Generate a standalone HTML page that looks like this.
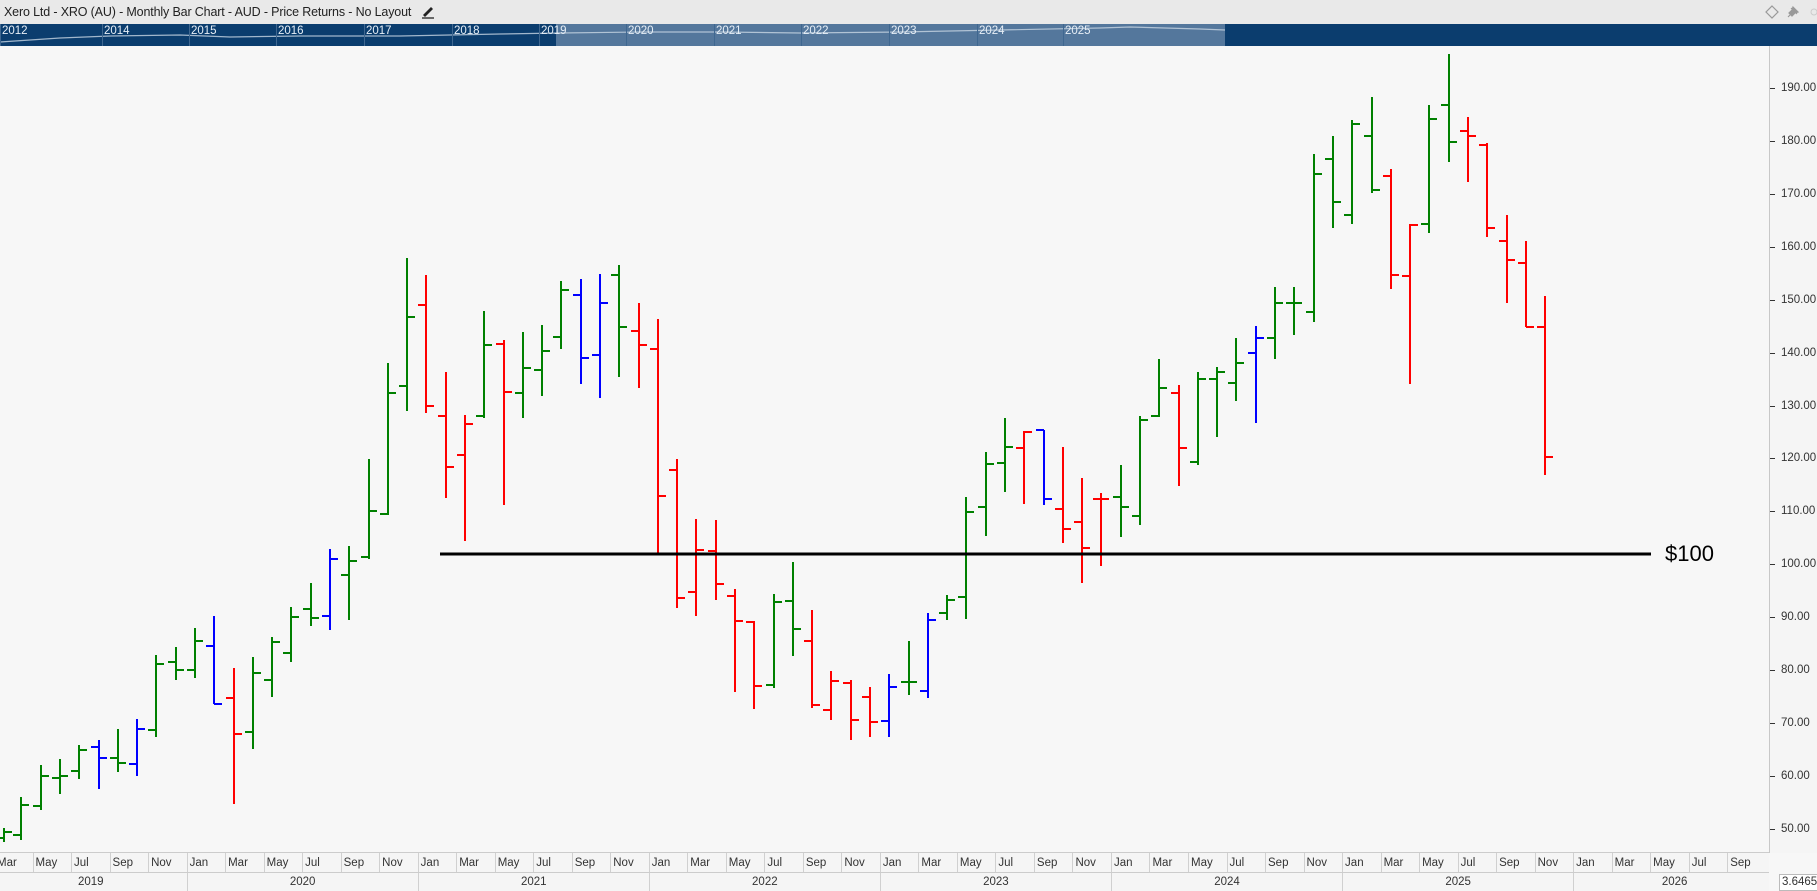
<!DOCTYPE html>
<html><head><meta charset="utf-8"><style>
*{margin:0;padding:0;box-sizing:border-box}
body{width:1817px;height:891px;overflow:hidden;background:#f7f7f7;font-family:"Liberation Sans",sans-serif;position:relative;color:#333}
#title{position:absolute;left:0;top:0;width:1817px;height:24px;background:#e9e9e9;font-size:12.5px;line-height:24px;padding-left:4px;color:#222;letter-spacing:-0.15px;white-space:nowrap}
#nav{position:absolute;left:0;top:24px;width:1817px;height:22px;background:#0b3d6e}
#sel{position:absolute;left:556px;top:0;width:669px;height:22px;background:#54779c}
.ny{position:absolute;top:0;height:22px;border-left:1px solid #3f6790;color:#e6eef6;font-size:11.5px;line-height:14px;padding-left:1px}
#axis{position:absolute;left:1769px;top:46px;width:48px;height:807px;border-left:1px solid #c8c8c8;background:#f5f5f5}
.pl{position:absolute;left:1781px;font-size:11.5px;color:#333;transform:translateY(-50%)}
.pt{position:absolute;left:1770px;width:5px;height:1px;background:#333}
#months{position:absolute;left:0;top:852px;width:1769px;height:21px;border-top:1px solid #ccc;border-bottom:1px solid #ccc;overflow:hidden;background:#f5f5f5}
#mrow{position:absolute;left:-6px;top:0;display:flex;height:20px}
#mrow div{width:38.52px;flex:none;border-left:1px solid #d0d0d0;font-size:11.5px;line-height:20px;padding-left:2px}
#years{position:absolute;left:0;top:873px;width:1769px;height:18px;overflow:hidden;background:#f5f5f5}
#yrow{position:absolute;left:-6px;top:0;display:flex;height:18px}
#yrow div{flex:none;border-left:1px solid #d0d0d0;font-size:11.5px;line-height:18px;text-align:center}
</style></head><body>
<div id="title">Xero Ltd - XRO (AU) - Monthly Bar Chart - AUD - Price Returns - No Layout<svg style="vertical-align:-3px;margin-left:9px" width="16" height="16" viewBox="0 0 16 16"><path d="M3 12 L11 4 L13 6 L5 14 Z" fill="#222"/><path d="M2 15 H14" stroke="#222" stroke-width="1.3"/></svg></div>
<svg style="position:absolute;left:1764px;top:3px" width="53" height="18" viewBox="0 0 53 18"><path d="M8 3 L14 9 L8 15 L2 9 Z" fill="none" stroke="#999" stroke-width="1.2"/><path d="M24 14 L28 10 M27 5 L33 11 M29 4 L34 9 L31 10 L28 13 L25 10 L28 7 Z" stroke="#999" fill="#999" stroke-width="1.2"/><circle cx="50" cy="9" r="3" fill="none" stroke="#ccc"/></svg>
<div id="nav">
<div id="sel"></div>
<svg style="position:absolute;left:0;top:0" width="1225" height="22"><polyline points="0,18 60,14 110,12 180,11 230,13 300,12 400,12 500,10 560,9 640,8 720,8 800,9 900,8 1000,6 1100,4 1130,3 1200,5 1225,6" fill="none" stroke="#c8d6e4" stroke-width="1.2" opacity=".8"/></svg>
<div class="ny" style="left:0">2012</div><div class="ny" style="left:102px">2014</div><div class="ny" style="left:189px">2015</div><div class="ny" style="left:276px">2016</div><div class="ny" style="left:364px">2017</div><div class="ny" style="left:452px">2018</div><div class="ny" style="left:539px">2019</div><div class="ny" style="left:626px">2020</div><div class="ny" style="left:714px">2021</div><div class="ny" style="left:801px">2022</div><div class="ny" style="left:889px">2023</div><div class="ny" style="left:977px">2024</div><div class="ny" style="left:1063px">2025</div>
</div>
<svg id="chart" style="position:absolute;left:0;top:0" width="1769" height="852"></svg>
<div id="axis"></div>
<div class="pt" style="top:88px"></div><div class="pl" style="top:88px">190.00</div>
<div class="pt" style="top:141px"></div><div class="pl" style="top:141px">180.00</div>
<div class="pt" style="top:194px"></div><div class="pl" style="top:194px">170.00</div>
<div class="pt" style="top:247px"></div><div class="pl" style="top:247px">160.00</div>
<div class="pt" style="top:300px"></div><div class="pl" style="top:300px">150.00</div>
<div class="pt" style="top:353px"></div><div class="pl" style="top:353px">140.00</div>
<div class="pt" style="top:406px"></div><div class="pl" style="top:406px">130.00</div>
<div class="pt" style="top:458px"></div><div class="pl" style="top:458px">120.00</div>
<div class="pt" style="top:511px"></div><div class="pl" style="top:511px">110.00</div>
<div class="pt" style="top:564px"></div><div class="pl" style="top:564px">100.00</div>
<div class="pt" style="top:617px"></div><div class="pl" style="top:617px">90.00</div>
<div class="pt" style="top:670px"></div><div class="pl" style="top:670px">80.00</div>
<div class="pt" style="top:723px"></div><div class="pl" style="top:723px">70.00</div>
<div class="pt" style="top:776px"></div><div class="pl" style="top:776px">60.00</div>
<div class="pt" style="top:829px"></div><div class="pl" style="top:829px">50.00</div>
<div style="position:absolute;left:1665px;top:541px;font-size:22px;color:#000">$100</div>
<div id="months"><div id="mrow">
<div>Mar</div><div>May</div><div>Jul</div><div>Sep</div><div>Nov</div><div>Jan</div>
<div>Mar</div><div>May</div><div>Jul</div><div>Sep</div><div>Nov</div><div>Jan</div>
<div>Mar</div><div>May</div><div>Jul</div><div>Sep</div><div>Nov</div><div>Jan</div>
<div>Mar</div><div>May</div><div>Jul</div><div>Sep</div><div>Nov</div><div>Jan</div>
<div>Mar</div><div>May</div><div>Jul</div><div>Sep</div><div>Nov</div><div>Jan</div>
<div>Mar</div><div>May</div><div>Jul</div><div>Sep</div><div>Nov</div><div>Jan</div>
<div>Mar</div><div>May</div><div>Jul</div><div>Sep</div><div>Nov</div><div>Jan</div>
<div>Mar</div><div>May</div><div>Jul</div><div>Sep</div>
</div></div>
<div id="years"><div id="yrow">
<div style="width:192.6px">2019</div><div style="width:231.1px">2020</div><div style="width:231.1px">2021</div><div style="width:231.1px">2022</div><div style="width:231.1px">2023</div><div style="width:231.1px">2024</div><div style="width:231.1px">2025</div><div style="width:202px">2026</div>
</div></div>
<div style="position:absolute;left:1779px;top:874px;width:40px;height:17px;border:1px solid #bbb;background:#fff;font-size:11.5px;line-height:15px;padding-left:2px;overflow:hidden">3.6465</div>
<script>
var G="#008000",R="#ff0000",B="#0000ff";
var d=[[4,828,842,838,832,G],[21,797,840,835,805,G],[41,765,810,806,776,G],[60,759,794,778,776,G],[79,745,779,771,750,G],[99,740,789,747,758,B],[118,729,772,758,763,G],[137,719,776,764,729,B],[156,655,737,730,664,G],[176,647,680,662,670,G],[195,628,678,670,641,G],[214,616,704,646,704,B],[234,668,804,698,734,R],[253,657,749,732,673,G],[272,637,697,680,642,G],[291,607,662,653,617,G],[311,583,626,609,618,G],[330,549,630,616,559,B],[349,546,620,575,561,G],[369,459,559,557,511,G],[388,363,515,514,393,G],[407,258,411,386,317,G],[426,275,413,305,406,R],[446,372,498,416,467,R],[465,415,541,455,424,R],[484,311,418,416,345,G],[504,340,505,344,392,R],[523,332,418,393,368,G],[542,325,396,370,351,G],[561,281,349,337,290,G],[581,279,384,295,358,B],[600,274,398,355,303,B],[619,265,377,275,327,G],[639,303,388,331,345,R],[658,319,554,349,496,R],[677,459,608,470,598,R],[696,519,616,592,550,R],[716,520,600,551,584,R],[735,589,692,596,621,R],[754,621,709,622,686,R],[774,594,688,685,602,G],[793,562,656,601,629,G],[812,610,708,641,705,R],[831,671,720,710,681,R],[851,680,740,683,720,R],[870,687,737,697,722,R],[889,674,737,721,687,B],[909,641,695,682,682,G],[928,613,698,691,620,B],[947,595,620,613,600,G],[966,497,619,597,512,G],[986,452,536,507,464,G],[1005,418,492,463,447,G],[1024,431,504,448,432,R],[1044,430,505,430,499,B],[1063,447,543,509,529,R],[1082,478,583,522,548,R],[1101,493,566,499,499,R],[1121,465,537,497,507,G],[1140,416,525,516,420,G],[1159,359,417,416,388,G],[1179,385,486,393,448,R],[1198,372,465,462,379,G],[1217,367,437,379,372,G],[1236,338,401,383,363,G],[1256,326,423,353,338,B],[1275,287,359,338,303,G],[1294,287,335,303,303,G],[1314,154,322,312,174,G],[1333,136,228,159,202,G],[1352,120,224,215,124,G],[1372,97,193,136,190,G],[1391,169,289,176,275,R],[1410,224,384,276,225,R],[1429,105,233,224,119,G],[1449,54,162,105,142,G],[1468,117,182,131,136,R],[1487,143,237,145,228,R],[1507,215,303,241,260,R],[1526,241,327,263,327,R],[1545,296,475,327,457,R]];
var s='';
d.forEach(function(b){var x=b[0];s+='<g stroke="'+b[5]+'" stroke-width="2"><line x1="'+x+'" y1="'+b[1]+'" x2="'+x+'" y2="'+b[2]+'"/><line x1="'+(x-8)+'" y1="'+b[3]+'" x2="'+x+'" y2="'+b[3]+'"/><line x1="'+x+'" y1="'+b[4]+'" x2="'+(x+8)+'" y2="'+b[4]+'"/></g>';});
s+='<line x1="440" y1="554" x2="1651" y2="554" stroke="#000" stroke-width="3"/>';
document.getElementById('chart').innerHTML=s;
</script>
</body></html>
